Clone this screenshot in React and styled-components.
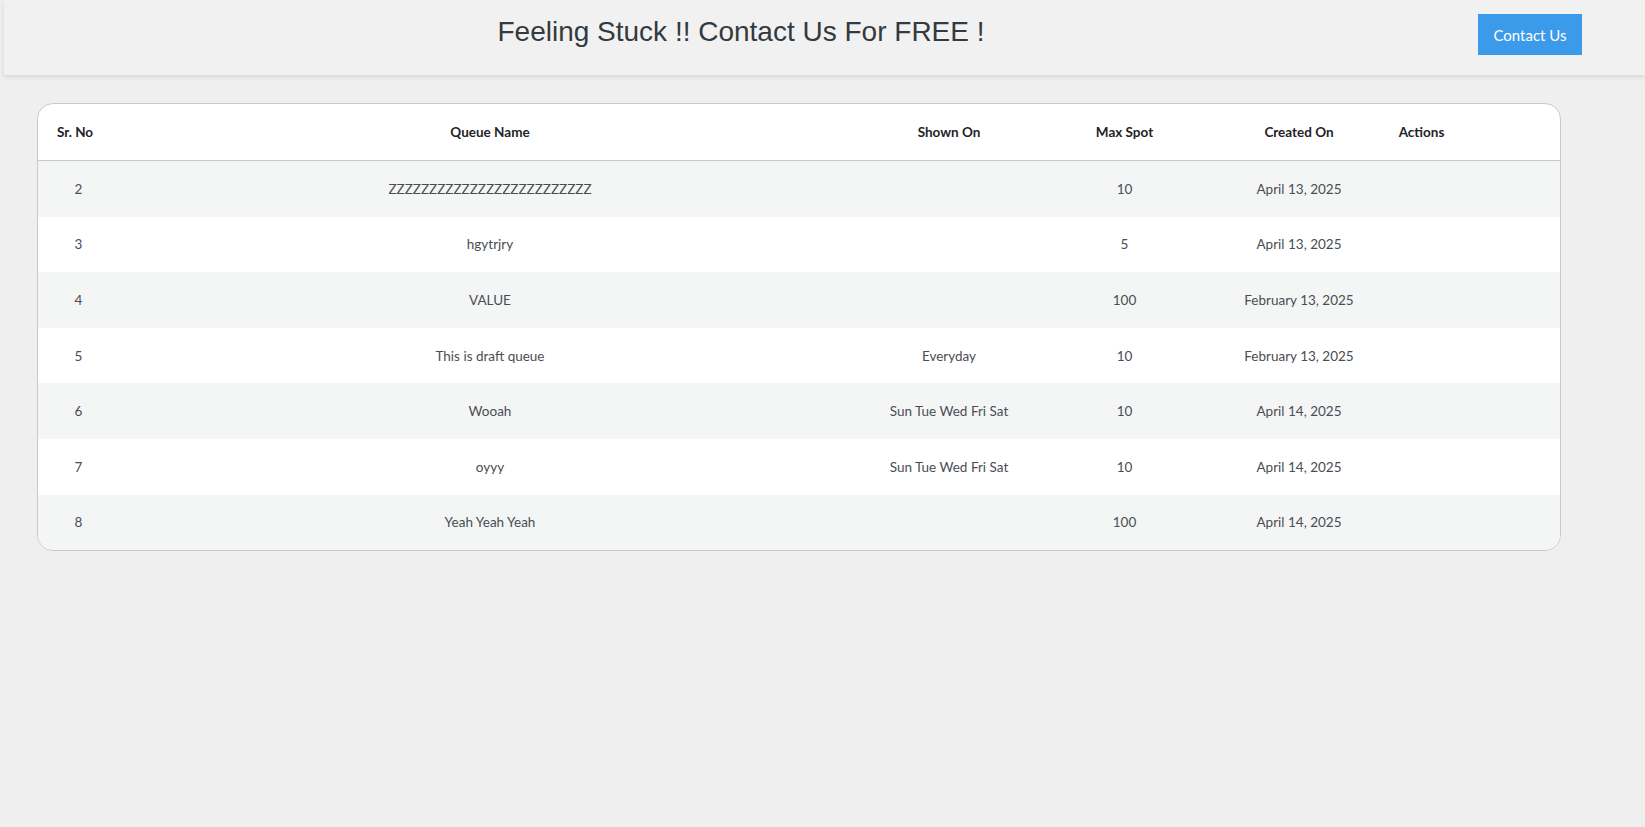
import styled, { createGlobalStyle } from "styled-components";

const rows = [
    { no: 2, name: "ZZZZZZZZZZZZZZZZZZZZZZZZZ", shown: "", spot: 10, created: "April 13, 2025" },
    { no: 3, name: "hgytrjry", shown: "", spot: 5, created: "April 13, 2025" },
    { no: 4, name: "VALUE", shown: "", spot: 100, created: "February 13, 2025" },
    { no: 5, name: "This is draft queue", shown: "Everyday", spot: 10, created: "February 13, 2025" },
    { no: 6, name: "Wooah", shown: "Sun Tue Wed Fri Sat", spot: 10, created: "April 14, 2025" },
    { no: 7, name: "oyyy", shown: "Sun Tue Wed Fri Sat", spot: 10, created: "April 14, 2025" },
    { no: 8, name: "Yeah Yeah Yeah", shown: "", spot: 100, created: "April 14, 2025" },
];

const columns = ["Sr. No", "Queue Name", "Shown On", "Max Spot", "Created On", "Actions"];

const App = () => {
    return (
        <>
            <GlobalStyle />
            <TopBar>
                <Title>Feeling Stuck !! Contact Us For FREE !</Title>
                <ContactButton>Contact Us</ContactButton>
            </TopBar>
            <Main>
                <Card>
                    <HeadRow>
                        {columns.map((c) => (
                            <HeadCell key={c}>{c}</HeadCell>
                        ))}
                        <HeadCell />
                    </HeadRow>
                    {rows.map((r, i) => (
                        <Row key={r.no} $striped={i % 2 === 0}>
                            <Cell $indent>{r.no}</Cell>
                            <Cell>{r.name}</Cell>
                            <Cell>{r.shown}</Cell>
                            <Cell>{r.spot}</Cell>
                            <Cell>{r.created}</Cell>
                            <Cell />
                            <Cell />
                        </Row>
                    ))}
                </Card>
            </Main>
        </>
    );
};

export default App;

const GlobalStyle = createGlobalStyle`
    body {
        margin: 0;
        background-color: #efefef;
        font-family: "Liberation Sans", Arial, sans-serif;
    }
`

const TopBar = styled.header`
    height: 75px;
    margin-left: 4px;
    padding-right: 63px;
    background-color: #f1f1f1;
    box-shadow: 0 2px 5px rgba(0, 0, 0, 0.1);
    display: flex;
    flex-direction: row;
    align-items: flex-start;
`

const Title = styled.h1`
    flex: 1;
    margin: 0;
    padding-top: 16px;
    text-align: center;
    font-family: "Liberation Sans", Arial, sans-serif;
    font-weight: 400;
    font-size: 28px;
    color: #333a40;
`

const ContactButton = styled.button`
    margin-top: 14px;
    width: 104px;
    height: 41px;
    border: none;
    background-color: #3b9aea;
    color: white;
    font-family: "Lato", sans-serif;
    font-size: 15px;
    cursor: pointer;
`

const Main = styled.main`
    padding: 28px 84px 0 37px;
`

const Card = styled.div`
    background-color: white;
    border: 1px solid #c9c9c9;
    border-radius: 16px;
    overflow: hidden;
    font-family: "Lato", sans-serif;
`

const grid = `
    display: grid;
    grid-template-columns: 74px 756px 162px 189px 160px 85px 1fr;
    align-items: center;
`

const HeadRow = styled.div`
    ${grid}
    height: 56px;
    border-bottom: 1px solid #c9c9c9;
`

const HeadCell = styled.div`
    text-align: center;
    font-weight: 700;
    font-size: 13.5px;
    color: #1f2328;
`

const Row = styled.div`
    ${grid}
    height: 55.6px;
    background-color: ${(p) => (p.$striped ? "#f4f6f6" : "white")};
`

const Cell = styled.div`
    padding-left: ${(p) => (p.$indent ? "7px" : "0")};
    text-align: center;
    font-size: 13.5px;
    color: #4a4d52;
`
